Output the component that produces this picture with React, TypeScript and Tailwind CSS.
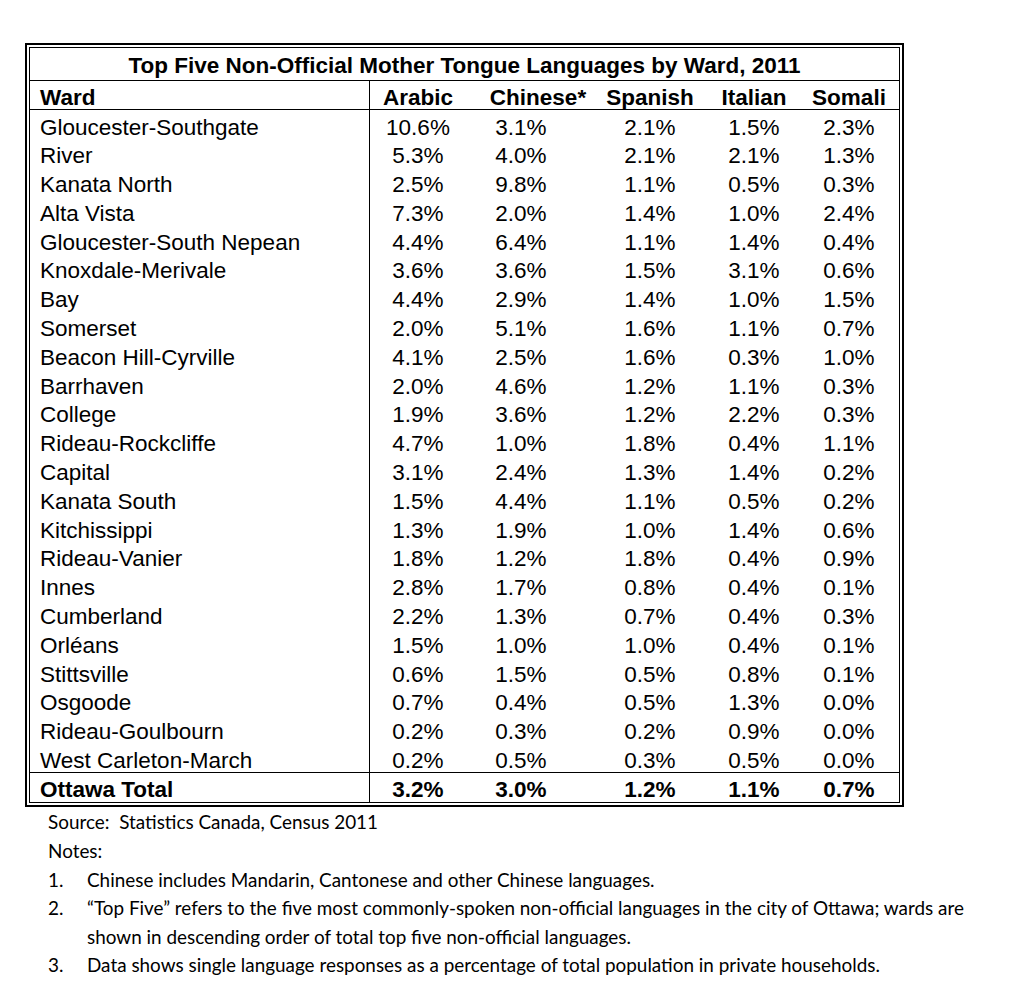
import React from "react";

type Row = [string, string, string, string, string, string];

const rows: Row[] = [
  ["Gloucester-Southgate", "10.6%", "3.1%", "2.1%", "1.5%", "2.3%"],
  ["River", "5.3%", "4.0%", "2.1%", "2.1%", "1.3%"],
  ["Kanata North", "2.5%", "9.8%", "1.1%", "0.5%", "0.3%"],
  ["Alta Vista", "7.3%", "2.0%", "1.4%", "1.0%", "2.4%"],
  ["Gloucester-South Nepean", "4.4%", "6.4%", "1.1%", "1.4%", "0.4%"],
  ["Knoxdale-Merivale", "3.6%", "3.6%", "1.5%", "3.1%", "0.6%"],
  ["Bay", "4.4%", "2.9%", "1.4%", "1.0%", "1.5%"],
  ["Somerset", "2.0%", "5.1%", "1.6%", "1.1%", "0.7%"],
  ["Beacon Hill-Cyrville", "4.1%", "2.5%", "1.6%", "0.3%", "1.0%"],
  ["Barrhaven", "2.0%", "4.6%", "1.2%", "1.1%", "0.3%"],
  ["College", "1.9%", "3.6%", "1.2%", "2.2%", "0.3%"],
  ["Rideau-Rockcliffe", "4.7%", "1.0%", "1.8%", "0.4%", "1.1%"],
  ["Capital", "3.1%", "2.4%", "1.3%", "1.4%", "0.2%"],
  ["Kanata South", "1.5%", "4.4%", "1.1%", "0.5%", "0.2%"],
  ["Kitchissippi", "1.3%", "1.9%", "1.0%", "1.4%", "0.6%"],
  ["Rideau-Vanier", "1.8%", "1.2%", "1.8%", "0.4%", "0.9%"],
  ["Innes", "2.8%", "1.7%", "0.8%", "0.4%", "0.1%"],
  ["Cumberland", "2.2%", "1.3%", "0.7%", "0.4%", "0.3%"],
  ["Orléans", "1.5%", "1.0%", "1.0%", "0.4%", "0.1%"],
  ["Stittsville", "0.6%", "1.5%", "0.5%", "0.8%", "0.1%"],
  ["Osgoode", "0.7%", "0.4%", "0.5%", "1.3%", "0.0%"],
  ["Rideau-Goulbourn", "0.2%", "0.3%", "0.2%", "0.9%", "0.0%"],
  ["West Carleton-March", "0.2%", "0.5%", "0.3%", "0.5%", "0.0%"],
];

const total: Row = ["Ottawa Total", "3.2%", "3.0%", "1.2%", "1.1%", "0.7%"];

const cols = "grid grid-cols-[340px_96px_110px_148px_60px_115px]";

const TableRow = ({ row, bold, className, pad }: { row: Row; bold?: boolean; className: string; pad: string }) => (
  <div className={`${cols} ${className} ${bold ? "font-bold" : ""}`}>
    <div className={`border-r border-black pl-[10px] ${pad} whitespace-nowrap`}>{row[0]}</div>
    {row.slice(1).map((v, i) => (
      <div key={i} className={`flex justify-center whitespace-nowrap ${pad} ${i === 4 ? "pl-[15px]" : ""}`}>
        {v}
      </div>
    ))}
  </div>
);

const App = () => {
  return (
    <div className="min-h-[998px] w-[1024px] bg-white text-black">
      <div className="ml-[25px] mt-[43px] w-[879px] border-2 border-black p-[2px] font-['Liberation_Sans',Arial,sans-serif] text-[22.5px] leading-[22px]">
        <div className="border border-black">
          <div className="h-[33px] border-b border-black pt-[7px] text-center font-bold whitespace-nowrap">
            Top Five Non-Official Mother Tongue Languages by Ward, 2011
          </div>
          <div className={`${cols} h-[29px] border-b border-black font-bold`}>
            <div className="border-r border-black pl-[10px] pt-[5.5px]">Ward</div>
            <div className="flex justify-center pt-[5.5px]">Arabic</div>
            <div className="flex justify-center whitespace-nowrap pt-[5.5px]">
              <span className="ml-[34px]">Chinese*</span>
            </div>
            <div className="flex justify-center pt-[5.5px]">Spanish</div>
            <div className="flex justify-center pt-[5.5px]">Italian</div>
            <div className="flex justify-center pl-[15px] pt-[5.5px]">Somali</div>
          </div>
          {rows.map((r) => (
            <TableRow key={r[0]} row={r} className="h-[28.8px]" pad="pt-[6.5px]" />
          ))}
          <TableRow row={total} bold className="h-[30px] border-t border-black" pad="pt-[5.5px]" />
        </div>
      </div>

      <div className="ml-[48px] mt-[1px] font-['Lato','Open_Sans',sans-serif] text-[18.9px] leading-[28.6px]">
        <div>Source:&nbsp; Statistics Canada, Census 2011</div>
        <div>Notes:</div>
        <ol>
          <li className="flex">
            <span className="w-[39px] shrink-0">1.</span>
            <span>Chinese includes Mandarin, Cantonese and other Chinese languages.</span>
          </li>
          <li className="flex">
            <span className="w-[39px] shrink-0">2.</span>
            <span className="whitespace-nowrap">
              “Top Five” refers to the five most commonly-spoken non-official languages in the city of Ottawa; wards are
              <br />
              shown in descending order of total top five non-official languages.
            </span>
          </li>
          <li className="flex">
            <span className="w-[39px] shrink-0">3.</span>
            <span>Data shows single language responses as a percentage of total population in private households.</span>
          </li>
        </ol>
      </div>
    </div>
  );
};

export default App;
